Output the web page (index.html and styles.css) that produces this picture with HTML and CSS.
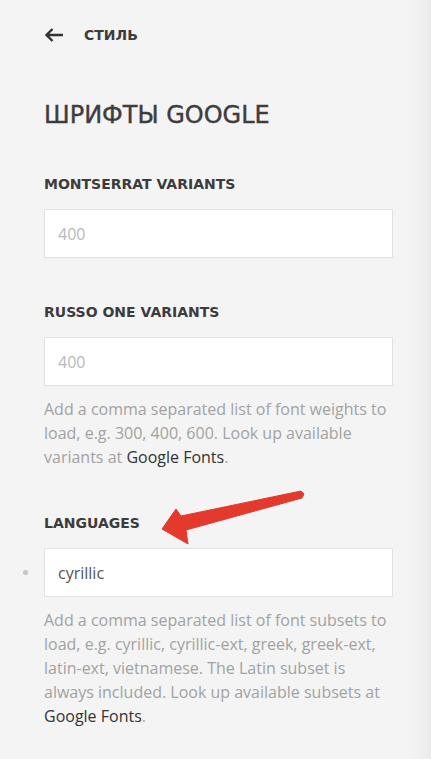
FILE: index.html
```html
<!DOCTYPE html>
<html lang="ru">
  <head>
    <meta charset="UTF-8" />
    <meta name="viewport" content="width=device-width, initial-scale=1.0" />
    <title>Шрифты Google</title>

    <!-- Styles -->
    <link rel="stylesheet" href="styles.css">
  </head>
  <body>
    <div class="panel">
      <!-- Back link -->
      <div class="back">
        <svg class="back-icon" width="20" height="16" viewBox="0 0 20 16">
          <path d="M19 8H2.5M8.5 2L2.5 8l6 6" fill="none" stroke="#333" stroke-width="2.4" />
        </svg>
        <span class="back-text">СТИЛЬ</span>
      </div>

      <h1 class="title">ШРИФТЫ GOOGLE</h1>

      <!-- Variants -->
      <div class="field">
        <label class="label" for="montserrat">MONTSERRAT VARIANTS</label>
        <input class="input" id="montserrat" type="text" placeholder="400" />
      </div>

      <div class="field">
        <label class="label" for="russo">RUSSO ONE VARIANTS</label>
        <input class="input" id="russo" type="text" placeholder="400" />
        <p class="help">Add a comma separated list of font weights to load, e.g. 300, 400, 600. Look up available variants at <a href="#">Google Fonts</a>.</p>
      </div>

      <!-- Languages -->
      <div class="field field-marked">
        <label class="label" for="languages">LANGUAGES</label>
        <input class="input input-filled" id="languages" type="text" value="cyrillic" />
        <p class="help">Add a comma separated list of font subsets to load, e.g. cyrillic, cyrillic-ext, greek, greek-ext, latin-ext, vietnamese. The Latin subset is always included. Look up available subsets at <a href="#">Google Fonts</a>.</p>
      </div>
    </div>

    <!-- Annotation arrow -->
    <svg class="annotation" width="431" height="759" viewBox="0 0 431 759">
      <polygon
        points="301,491 304,494 302,498 186,530 188,544 162,529 176,509 181,516"
        fill="#e4392d"
        stroke="#e4392d"
        stroke-width="1"
        stroke-linejoin="round"
      />
    </svg>
  </body>
</html>
```

FILE: styles.css
```css
/* General Styles */
body {
  margin: 0;
  font-family: "Open Sans", sans-serif;
  background: linear-gradient(to right, #f4f4f4 0, #f4f4f4 412px, #eaeaea 431px);
  min-height: 759px;
}

.panel {
  padding: 25px 38px 40px 44px;
}

/* Back link */
.back {
  display: flex;
  align-items: center;
  gap: 20px;
  height: 20px;
}

.back-icon {
  display: block;
}

.back-text {
  font-family: "DejaVu Sans", sans-serif;
  font-weight: bold;
  font-size: 14px;
  line-height: 20px;
  color: #3c3c3c;
}

/* Title */
.title {
  margin: 55px 0 0;
  font-family: "DejaVu Sans", sans-serif;
  font-weight: normal;
  font-size: 24px;
  line-height: 30px;
  color: #3d3d3d;
  -webkit-text-stroke: 0.4px #3d3d3d;
}

/* Field Styles */
.field {
  position: relative;
  margin-top: 44px;
}

.label {
  display: block;
  margin-bottom: 15px;
  font-family: "DejaVu Sans", sans-serif;
  font-weight: bold;
  font-size: 14px;
  line-height: 20px;
  color: #3c3c3c;
}

.input {
  display: block;
  box-sizing: border-box;
  width: 100%;
  height: 49px;
  margin: 0;
  padding: 0 13px;
  border: 1px solid #e2e2e2;
  background: #fff;
  font-family: "Open Sans", sans-serif;
  font-size: 16px;
  color: #555;
  outline: none;
}

.input::placeholder {
  color: #b9b9b9;
}

.input-filled {
  color: #555;
}

.field-marked::before {
  content: "";
  position: absolute;
  left: -21px;
  top: 57px;
  width: 5px;
  height: 5px;
  border-radius: 50%;
  background: #c6c6c6;
}

.help {
  margin: 11px 0 0;
  font-size: 16px;
  line-height: 24px;
  color: #a2a2a2;
}

.help a {
  color: #333;
  text-decoration: none;
}

/* Annotation */
.annotation {
  position: absolute;
  left: 0;
  top: 0;
  pointer-events: none;
}
```
